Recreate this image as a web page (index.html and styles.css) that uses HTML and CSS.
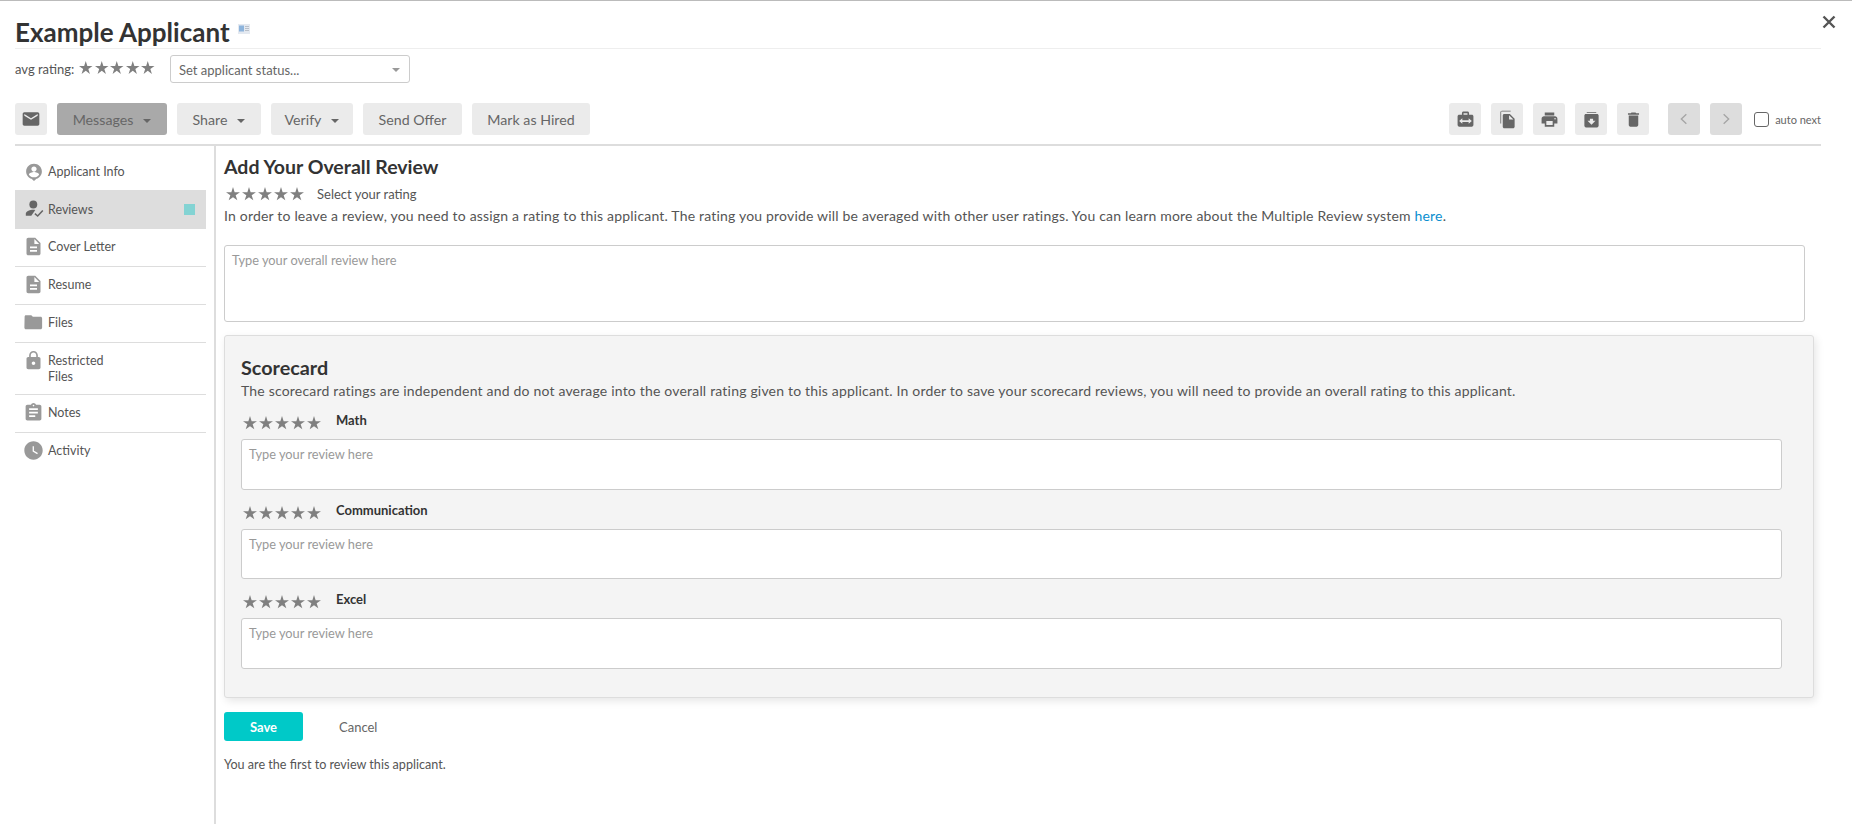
FILE: index.html
```html
<!DOCTYPE html>
<html lang="en">
<head>
<meta charset="utf-8">
<title>Example Applicant</title>
<link rel="stylesheet" href="styles.css">
</head>
<body>
<svg class="defs" width="0" height="0" aria-hidden="true">
  <defs>
    <symbol id="star" viewBox="0 0 24 24"><path d="M12 1.600L14.470 9.200H22.460L16 13.900 18.470 21.500 12 16.800 5.530 21.500 8 13.900 1.540 9.200H9.530z"/></symbol>
    <symbol id="doc" viewBox="0 0 24 24"><path d="M14 2H6c-1.100 0-1.990.9-1.990 2L4 20c0 1.100.89 2 1.990 2H18c1.100 0 2-.9 2-2V8l-6-6zm2 16H8v-2h8v2zm0-4H8v-2h8v2zm-3-5V3.500L18.500 9H13z"/></symbol>
  </defs>
</svg>
<div class="panel">
  <header class="head">
    <div class="title-row">
      <h1>Example Applicant</h1>
      <svg class="card-ico" viewBox="0 0 12 10"><rect width="12" height="10" fill="#e4e9f0"/><rect x="1" y="1.500" width="5" height="6" fill="#8db4dc"/><rect x="7" y="2" width="4" height="1" fill="#b9bfc8"/><rect x="7" y="4" width="4" height="1" fill="#b9bfc8"/><rect x="7" y="6" width="4" height="1" fill="#b9bfc8"/></svg>
    </div>
    <div class="status-row">
      <span class="avg">avg rating:</span>
      <span class="stars sm"><svg><use href="#star"/></svg><svg><use href="#star"/></svg><svg><use href="#star"/></svg><svg><use href="#star"/></svg><svg><use href="#star"/></svg></span>
      <div class="select">Set applicant status...<i class="caret lt"></i></div>
    </div>
    <div class="toolbar">
      <button class="btn ico"><svg viewBox="0 0 24 24"><path d="M20 4H4c-1.100 0-2 .9-2 2v12c0 1.100.9 2 2 2h16c1.100 0 2-.9 2-2V6c0-1.100-.9-2-2-2zm0 4l-8 5-8-5V6l8 5 8-5v2z"/></svg></button>
      <button class="btn active w-msg">Messages<i class="caret"></i></button>
      <button class="btn w-share">Share<i class="caret"></i></button>
      <button class="btn w-verify">Verify<i class="caret"></i></button>
      <button class="btn w-offer">Send Offer</button>
      <button class="btn w-hired">Mark as Hired</button>
      <div class="tools">
        <button class="btn sq"><svg viewBox="0 0 24 24"><path d="M20 6h-3.500V4c0-1.100-.9-2-2-2h-5c-1.100 0-2 .9-2 2v2H4c-1.100 0-2 .9-2 2v11c0 1.100.9 2 2 2h16c1.100 0 2-.9 2-2V8c0-1.100-.9-2-2-2zm-5.500 0h-5V4h5v2z"/><path class="cut" d="M4 14l4-3.500v2.300h8v-2.300l4 3.500-4 3.500v-2.300H8v2.300z"/></svg></button>
        <button class="btn sq"><svg viewBox="0 0 24 24"><path d="M16 1H5c-1.100 0-2 .9-2 2v14h1V2h12V1zm-1 4l6 6v10c0 1.100-.9 2-2 2H7.990C6.890 23 6 22.100 6 21l.01-14c0-1.100.89-2 1.990-2h7zm-1 7h5.500L14 6.500V12z"/></svg></button>
        <button class="btn sq"><svg viewBox="0 0 24 24"><path d="M19 8H5c-1.660 0-3 1.340-3 3v6h4v4h12v-4h4v-6c0-1.660-1.340-3-3-3zm-3 11H8v-5h8v5zm3-7c-.55 0-1-.45-1-1s.45-1 1-1 1 .45 1 1-.45 1-1 1zm-1-9H6v4h12V3z"/></svg></button>
        <button class="btn sq"><svg viewBox="0 0 24 24"><path d="M6 2.500h12v1H6zM5 5h14c1.100 0 2 .9 2 2v13c0 1.100-.9 2-2 2H5c-1.100 0-2-.9-2-2V7c0-1.100.9-2 2-2zm7 13.500l5-5h-3V11h-4v2.500H7z"/></svg></button>
        <button class="btn sq"><svg viewBox="0 0 24 24"><path d="M6 19c0 1.100.9 2 2 2h8c1.100 0 2-.9 2-2V7H6v12zM19 4h-3.500l-1-1h-5l-1 1H5v2h14V4z"/></svg></button>
      </div>
      <div class="pager">
        <button class="btn sq nav"><svg viewBox="0 0 24 24"><path d="M15.500 5L8 12l7.500 7"/></svg></button>
        <button class="btn sq nav"><svg viewBox="0 0 24 24"><path d="M8.500 5l7.500 7-7.500 7"/></svg></button>
      </div>
      <label class="auto"><span class="check"></span>auto next</label>
    </div>
  </header>
  <button class="close" aria-label="Close"><svg viewBox="0 0 14 14"><path d="M1.500 1.500l11 11M12.500 1.500l-11 11"/></svg></button>

  <div class="content">
    <nav class="side">
      <a class="item flat i-info"><svg viewBox="0 0 24 24"><path d="M12 1C6.200 1 1.500 5.500 1.500 11.200c0 4.600 3 8.400 7.200 9.800L12 24l3.300-3c4.200-1.400 7.200-5.200 7.200-9.800C22.500 5.500 17.800 1 12 1zm0 3.500c2 0 3.500 1.600 3.500 3.500s-1.500 3.500-3.500 3.500S8.500 9.900 8.500 8 10 4.500 12 4.500zm0 14.500c-2.900 0-5.400-1.400-6.800-3.500.1-2.300 4.500-3.500 6.800-3.500s6.700 1.200 6.800 3.500c-1.400 2.100-3.900 3.500-6.800 3.500z"/></svg>Applicant Info</a>
      <a class="item current flat"><svg viewBox="0 0 24 24"><circle cx="10.500" cy="7" r="5"/><path d="M1 21v-2.500c0-3.500 6-5 9-5 1 0 2 .1 3 .4L8 21z"/><path class="tick" d="M12.500 18.500l3.500 3 6.500-7"/></svg>Reviews<i class="mark"></i></a>
      <a class="item"><svg viewBox="0 0 24 24"><use href="#doc"/></svg>Cover Letter</a>
      <a class="item"><svg viewBox="0 0 24 24"><use href="#doc"/></svg>Resume</a>
      <a class="item i-folder"><svg viewBox="0 0 24 24"><path d="M9.500 3H2.500C1.400 3 .8 3.900 .8 5L.5 19c0 1.100.9 2 2 2h19c1.100 0 2-.9 2-2V7c0-1.100-.9-2-2-2h-10z"/></svg>Files</a>
      <a class="item tall"><svg viewBox="0 0 24 24"><path d="M18 8h-1V6c0-2.760-2.240-5-5-5S7 3.240 7 6v2H6c-1.100 0-2 .9-2 2v10c0 1.100.9 2 2 2h12c1.100 0 2-.9 2-2V10c0-1.100-.9-2-2-2zm-6 9c-1.100 0-2-.9-2-2s.9-2 2-2 2 .9 2 2-.9 2-2 2zm3.100-9H8.900V6c0-1.710 1.390-3.100 3.100-3.100 1.710 0 3.100 1.390 3.100 3.100v2z"/></svg><span>Restricted<br>Files</span></a>
      <a class="item"><svg viewBox="0 0 24 24"><path d="M19 3h-4.180C14.400 1.840 13.300 1 12 1c-1.300 0-2.400.84-2.820 2H5c-1.100 0-2 .9-2 2v14c0 1.100.9 2 2 2h14c1.100 0 2-.9 2-2V5c0-1.100-.9-2-2-2zm-7 0c.55 0 1 .45 1 1s-.45 1-1 1-1-.45-1-1 .45-1 1-1zm2 14H7v-2h7v2zm3-4H7v-2h10v2zm0-4H7V7h10v2z"/></svg>Notes</a>
      <a class="item flat"><svg viewBox="0 0 24 24"><path d="M12 1.500C6.200 1.500 1.500 6.200 1.500 12S6.200 22.500 12 22.500 22.500 17.800 22.500 12 17.800 1.500 12 1.500zm4.200 14.700L11 13V7h1.500v5.200l4.500 2.700-.8 1.300z"/></svg>Activity</a>
    </nav>

    <main class="main">
      <h2>Add Your Overall Review</h2>
      <div class="rate">
        <span class="stars"><svg><use href="#star"/></svg><svg><use href="#star"/></svg><svg><use href="#star"/></svg><svg><use href="#star"/></svg><svg><use href="#star"/></svg></span>
        <span class="rate-label">Select your rating</span>
      </div>
      <p class="intro">In order to leave a review, you need to assign a rating to this applicant. The rating you provide will be averaged with other user ratings. You can learn more about the Multiple Review system <a href="#">here</a>.</p>
      <textarea class="field overall" placeholder="Type your overall review here"></textarea>

      <section class="card">
        <h3>Scorecard</h3>
        <p class="card-text">The scorecard ratings are independent and do not average into the overall rating given to this applicant. In order to save your scorecard reviews, you will need to provide an overall rating to this applicant.</p>
        <div class="crit">
          <div class="crit-head"><span class="stars"><svg><use href="#star"/></svg><svg><use href="#star"/></svg><svg><use href="#star"/></svg><svg><use href="#star"/></svg><svg><use href="#star"/></svg></span><b>Math</b></div>
          <textarea class="field" placeholder="Type your review here"></textarea>
        </div>
        <div class="crit">
          <div class="crit-head"><span class="stars"><svg><use href="#star"/></svg><svg><use href="#star"/></svg><svg><use href="#star"/></svg><svg><use href="#star"/></svg><svg><use href="#star"/></svg></span><b>Communication</b></div>
          <textarea class="field" placeholder="Type your review here"></textarea>
        </div>
        <div class="crit">
          <div class="crit-head"><span class="stars"><svg><use href="#star"/></svg><svg><use href="#star"/></svg><svg><use href="#star"/></svg><svg><use href="#star"/></svg><svg><use href="#star"/></svg></span><b>Excel</b></div>
          <textarea class="field" placeholder="Type your review here"></textarea>
        </div>
      </section>

      <div class="actions">
        <button class="save">Save</button>
        <a class="cancel">Cancel</a>
      </div>
      <p class="first">You are the first to review this applicant.</p>
    </main>
  </div>
</div>
</body>
</html>
```
FILE: styles.css
```css
* { box-sizing: border-box; }
html, body { margin: 0; height: 100%; overflow: hidden; background: #fff; }
body { font-family: "Lato", "Liberation Sans", sans-serif; font-size: 13px; color: #555; }
.defs { position: absolute; }
.panel { position: relative; height: 100vh; display: flex; flex-direction: column; border-top: 1px solid #bbb; }
.head { padding: 0 31px 0 15px; }
.title-row { height: 48px; border-bottom: 1px solid #eee; display: flex; align-items: flex-start; }
h1 { margin: 17px 0 0; font-size: 26px; line-height: 28px; font-weight: 700; color: #333; white-space: nowrap; }
.card-ico { width: 12px; height: 10px; margin: 23px 0 0 8px; }
.status-row { height: 28px; margin-top: 6px; display: flex; align-items: center; }
.avg { width: 63px; flex: none; font-size: 13px; color: #555; white-space: nowrap; }
.stars { display: inline-flex; flex: none; }
.stars svg { width: 16px; height: 16px; fill: #808080; }
.stars.sm { width: 92px; margin-top: -2px; }
.stars.sm svg { width: 15.500px; height: 15.500px; }
.select { position: relative; width: 240px; height: 28px; border: 1px solid #ccc; border-radius: 3px; padding-left: 8px; line-height: 28px; font-size: 13px; color: #666; }
.caret { display: inline-block; width: 0; height: 0; margin-left: 10px; vertical-align: middle; border: 4px solid transparent; border-top-color: #666; border-bottom: 0; }
.caret.lt { position: absolute; right: 9px; top: 12px; border-top-color: #999; }
.toolbar { height: 32px; margin-top: 20px; display: flex; align-items: center; }
.btn { height: 32px; border: 0; border-radius: 3px; background: #ebebeb; color: #666; font: 14.200px "Lato", "Liberation Sans", sans-serif; padding: 0; margin-right: 10px; flex: none; }
.btn svg { display: block; margin: auto; fill: #666; }
.btn.ico { width: 32px; }
.btn.ico svg { width: 20px; height: 20px; }
.btn.active { background: #a9a9a9; }
.w-msg { width: 110px; }
.w-share { width: 84px; }
.w-verify { width: 82px; }
.w-offer { width: 99px; }
.w-hired { width: 118px; }
.tools { margin-left: auto; display: flex; }
.btn.sq { width: 32px; margin-right: 10px; }
.btn.sq svg { width: 19px; height: 19px; }
.cut { fill: #ebebeb; }
.pager { margin-left: 9px; display: flex; }
.btn.nav { background: #ddd; }
.btn.nav svg { fill: none; stroke: #a5a5a5; stroke-width: 2; width: 16px; height: 16px; }
.auto { display: flex; align-items: center; margin-left: 2px; font-size: 11px; color: #666; white-space: nowrap; }
.check { width: 15px; height: 15px; border: 1px solid #666; border-radius: 3px; margin-right: 6px; background: #fff; }
.close { position: absolute; top: 14px; right: 16px; width: 14px; height: 14px; padding: 0; border: 0; background: none; }
.close svg { display: block; width: 14px; height: 14px; fill: none; stroke: #555; stroke-width: 2.400; }
.content { flex: 1; min-height: 0; margin: 9px 31px 0 15px; display: flex; border-top: 2px solid #ddd; }
.side { width: 201px; flex: none; padding: 6px 8px 0 0; border-right: 2px solid #ddd; }
.item { display: flex; align-items: flex-start; height: 38px; padding: 10.500px 0 0 33px; position: relative; line-height: 16px; font-size: 12.500px; color: #555; border-bottom: 1px solid #ddd; }
.item.flat { border-bottom: 0; }
.item.i-info { padding-top: 12px; }
.item.current { height: 38.500px; padding-top: 12px; background: #ddd; }
.item.tall { height: 52px; padding-top: 10px; }
.item svg { position: absolute; left: 8px; top: 7px; width: 21px; height: 21px; fill: #999; }
.item.i-info svg { left: 9.500px; top: 10.500px; width: 18px; height: 18px; }
.item.i-folder svg { left: 9px; top: 8.500px; width: 18.500px; height: 18.500px; }
.item.current svg { fill: #666; left: 9.500px; top: 9px; width: 19px; height: 19px; }
.tick { fill: none !important; stroke: #666; stroke-width: 2; }
.mark { position: absolute; right: 11px; top: 14px; width: 11px; height: 11px; background: #83d3d3; }
.main { flex: 1; min-width: 0; padding: 9px 38px 0 8px; margin-right: -31px; }
h2 { margin: 0; font-size: 19.500px; line-height: 24px; font-weight: 700; color: #333; }
.rate { display: flex; align-items: center; height: 16px; margin-top: 7px; padding-left: 1px; }
.rate-label { margin-left: 12px; font-size: 13px; }
.intro { margin: 4px 0 0; font-size: 14px; line-height: 20px; letter-spacing: .19px; color: #555; }
.intro a { color: #0a8ecf; text-decoration: none; }
.field { display: block; width: 100%; resize: none; border: 1px solid #ccc; border-radius: 3px; background: #fff; padding: 6px 7px 6px; font: 12.800px/16px "Lato", "Liberation Sans", sans-serif; color: #555; outline: 0; }
.field::placeholder { color: #999; opacity: 1; }
.overall { width: 1581px; height: 77px; margin-top: 19px; }
.card { margin-top: 13px; height: 363px; border: 1px solid #ddd; border-radius: 3px; background: #f4f4f4; box-shadow: 2px 3px 8px rgba(0,0,0,.1); padding: 20px 31px 0 16px; }
h3 { margin: 0; font-size: 19.800px; line-height: 22px; font-weight: 700; color: #333; }
.card-text { margin: 4px 0 0; font-size: 14px; line-height: 18px; letter-spacing: .19px; color: #555; }
.crit { height: 89.500px; }
.card-text + .crit { margin-top: 12px; }
.crit-head { display: flex; align-items: flex-start; height: 27px; line-height: 16px; }
.crit-head .stars { margin: 3px 0 0 1px; }
.crit-head b { margin-left: 14px; font-size: 13px; font-weight: 700; color: #333; }
.crit .field { height: 50.500px; }
.actions { margin-top: 14px; display: flex; align-items: center; height: 29px; }
.save { width: 79px; height: 29px; border: 0; border-radius: 3px; background: #00c9c8; color: #fff; font: 700 13px "Lato", "Liberation Sans", sans-serif; padding: 0; }
.cancel { margin-left: 36px; font-size: 13px; color: #666; }
.first { margin: 15px 0 0; font-size: 12.600px; line-height: 18px; color: #555; }
```
